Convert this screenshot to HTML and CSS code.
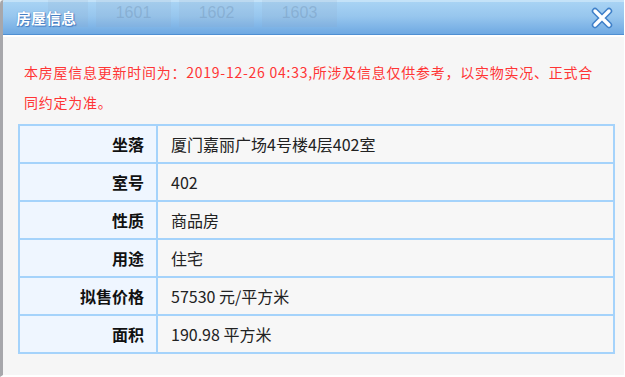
FILE: index.html
```html
<!DOCTYPE html>
<html lang="zh-CN">
<head>
<meta charset="utf-8">
<title>房屋信息</title>
<link rel="stylesheet" href="styles.css">
</head>
<body>
<div class="dialog">
  <div class="header">
    <div class="ghost-tabs">
      <span class="ghost g0"></span>
      <span class="ghost">1601</span>
      <span class="ghost">1602</span>
      <span class="ghost">1603</span>
    </div>
    <div class="title">房屋信息</div>
    <div class="close">
      <svg width="26" height="24" viewBox="0 0 26 24">
        <path d="M6 5 L20 19 M20 5 L6 19" stroke="#3f80c9" stroke-width="6.4" stroke-linecap="round" fill="none"/>
        <path d="M6 5 L20 19 M20 5 L6 19" stroke="#ffffff" stroke-width="3.4" stroke-linecap="round" fill="none"/>
      </svg>
    </div>
  </div>
  <div class="body">
    <p class="notice">本房屋信息更新时间为：2019-12-26 04:33,所涉及信息仅供参考，以实物实况、正式合同约定为准。</p>
    <table class="info">
      <tr><th>坐落</th><td>厦门嘉丽广场4号楼4层402室</td></tr>
      <tr><th>室号</th><td>402</td></tr>
      <tr><th>性质</th><td>商品房</td></tr>
      <tr><th>用途</th><td>住宅</td></tr>
      <tr><th>拟售价格</th><td>57530 元/平方米</td></tr>
      <tr><th>面积</th><td>190.98 平方米</td></tr>
    </table>
  </div>
</div>
</body>
</html>
```

FILE: styles.css
```css
html, body {
  margin: 0;
  padding: 0;
  background: #f6f6f6;
}
body {
  font-family: "Noto Sans CJK SC", "Microsoft YaHei", sans-serif;
  width: 625px;
  height: 377px;
  overflow: hidden;
}
.dialog {
  box-sizing: border-box;
  width: 625px;
  height: 377px;
  border-left: 3px solid #a7a7ab;
  border-right: 1px solid #ffffff;
  border-bottom: 2px solid #ffffff;
  border-top-left-radius: 4px;
  background: #f6f6f6;
  display: flex;
  flex-direction: column;
  overflow: hidden;
}
.header {
  position: relative;
  height: 35px;
  flex: 0 0 35px;
  box-sizing: border-box;
  border-top: 2px solid #c4e2f8;
  border-bottom: 1px solid #4f8fd2;
  background: linear-gradient(to bottom, #a8d3f4 0%, #97c6ee 45%, #6fa9e2 100%);
  display: flex;
  align-items: center;
  justify-content: space-between;
  padding: 0 9px 0 11px;
  margin-bottom: 2px;
  box-shadow: 0 2px 0 #ffffff;
}
.ghost-tabs {
  position: absolute;
  left: 45px;
  top: -2px;
  display: flex;
  gap: 8px;
}
.ghost {
  width: 75px;
  height: 27px;
  background: rgba(140, 165, 190, 0.14);
  color: rgba(110, 145, 180, 0.4);
  font-family: "Liberation Sans", sans-serif;
  font-size: 16px;
  text-align: center;
  line-height: 26px;
}
.ghost.g0 {
  width: 40px;
}
.title {
  position: relative;
  color: #ffffff;
  font-size: 15px;
  font-weight: bold;
  text-shadow: 0 0 1px #3d78c0, 1px 1px 1px #3d78c0;
  line-height: 20px;
  margin-left: 2px;
}
.close {
  position: relative;
  width: 26px;
  height: 24px;
  display: flex;
}
.body {
  flex: 1;
  padding: 20px 7px 0 15px;
}
.notice {
  margin: 0 0 7px 6px;
  color: #ff3535;
  font-size: 14px;
  line-height: 30px;
  letter-spacing: 0.75px;
  width: 578px;
}
.info {
  border-collapse: collapse;
  width: 597px;
  border: 2px solid #a5d3fb;
}
.info tr {
  height: 38px;
}
.info th, .info td {
  border: 2px solid #a5d3fb;
  font-size: 16px;
  padding: 0;
  line-height: 20px;
}
.info th {
  width: 124px;
  background: #eff6ff;
  text-align: right;
  padding-right: 12px;
  font-weight: bold;
  color: #111;
}
.info td {
  background: #f7f7f7;
  padding-left: 13px;
  color: #222;
}
```
